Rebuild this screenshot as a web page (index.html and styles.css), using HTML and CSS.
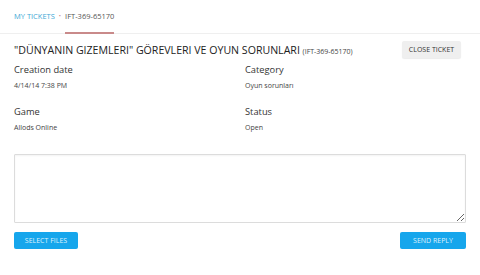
FILE: index.html
```html
<!DOCTYPE html>
<html>
<head>
<meta charset="utf-8">
<link rel="stylesheet" href="styles.css">
</head>
<body>
<nav class="breadcrumb">
  <a class="crumb-link">MY TICKETS</a>
  <span class="crumb-sep">•</span>
  <span class="crumb-current">IFT-369-65170</span>
  <span class="crumb-indicator"></span>
</nav>
<main class="page">
  <div class="title-row">
    <h1 class="title">"DÜNYANIN GIZEMLERI" GÖREVLERI VE OYUN SORUNLARI <small class="title-id">(IFT-369-65170)</small></h1>
    <button class="btn btn-light">CLOSE TICKET</button>
  </div>
  <div class="fields">
    <div class="field">
      <div class="field-label">Creation date</div>
      <div class="field-value">4/14/14 7:38 PM</div>
    </div>
    <div class="field">
      <div class="field-label">Category</div>
      <div class="field-value">Oyun sorunları</div>
    </div>
    <div class="field">
      <div class="field-label">Game</div>
      <div class="field-value">Allods Online</div>
    </div>
    <div class="field">
      <div class="field-label">Status</div>
      <div class="field-value">Open</div>
    </div>
  </div>
  <textarea class="reply"></textarea>
  <div class="actions">
    <button class="btn btn-blue">SELECT FILES</button>
    <button class="btn btn-blue">SEND REPLY</button>
  </div>
</main>
</body>
</html>
```

FILE: styles.css
```css
* { box-sizing: border-box; }
body {
  margin: 0;
  font-family: "Open Sans", "Liberation Sans", sans-serif;
  color: #333;
  background: #fff;
}
.breadcrumb {
  position: relative;
  height: 34px;
  display: flex;
  align-items: center;
  gap: 4px;
  padding: 0 14px 2px;
  font-size: 7.5px;
  border-bottom: 1px solid #efefef;
}
.crumb-link { color: #43a9d6; }
.crumb-sep { color: #c98a8a; font-size: 6px; }
.crumb-current { color: #555; }
.crumb-indicator {
  position: absolute;
  left: 65px;
  bottom: -1px;
  width: 49px;
  height: 2px;
  background: #c98a8a;
}
.page { padding: 0 14px; }
.title-row {
  display: flex;
  justify-content: space-between;
  align-items: center;
  margin-top: 7px;
  padding-right: 5px;
}
.title {
  margin: 0;
  font-size: 10.6px;
  font-weight: 400;
  color: #222;
}
.title-id { font-size: 7px; color: #444; }
.btn {
  font-family: "Open Sans", "Liberation Sans", sans-serif;
  font-size: 7px;
  height: 17px;
  border: none;
  border-radius: 2px;
  padding: 0;
  cursor: pointer;
}
.btn-light {
  width: 59px;
  background: #efefef;
  color: #333;
  box-shadow: 0 1px 1px rgba(0,0,0,0.08);
}
.fields {
  display: grid;
  grid-template-columns: 231px 1fr;
  row-gap: 14px;
  margin-top: 5px;
}
.field-label { font-size: 9.3px; line-height: 13px; color: #333; }
.field-value { font-size: 7px; line-height: 10px; margin-top: 5px; color: #444; }
.reply {
  display: block;
  width: 452px;
  height: 69px;
  margin-top: 21px;
  border: 1px solid #dcdcdc;
  border-radius: 1px;
  resize: vertical;
  box-shadow: inset 0 1px 2px rgba(0,0,0,0.05);
}
.actions {
  display: flex;
  justify-content: space-between;
  margin-top: 9px;
}
.btn-blue {
  background: #16a6ec;
  color: #dff2fc;
}
.actions .btn-blue:first-child { width: 64px; }
.actions .btn-blue:last-child { width: 66px; }
```
